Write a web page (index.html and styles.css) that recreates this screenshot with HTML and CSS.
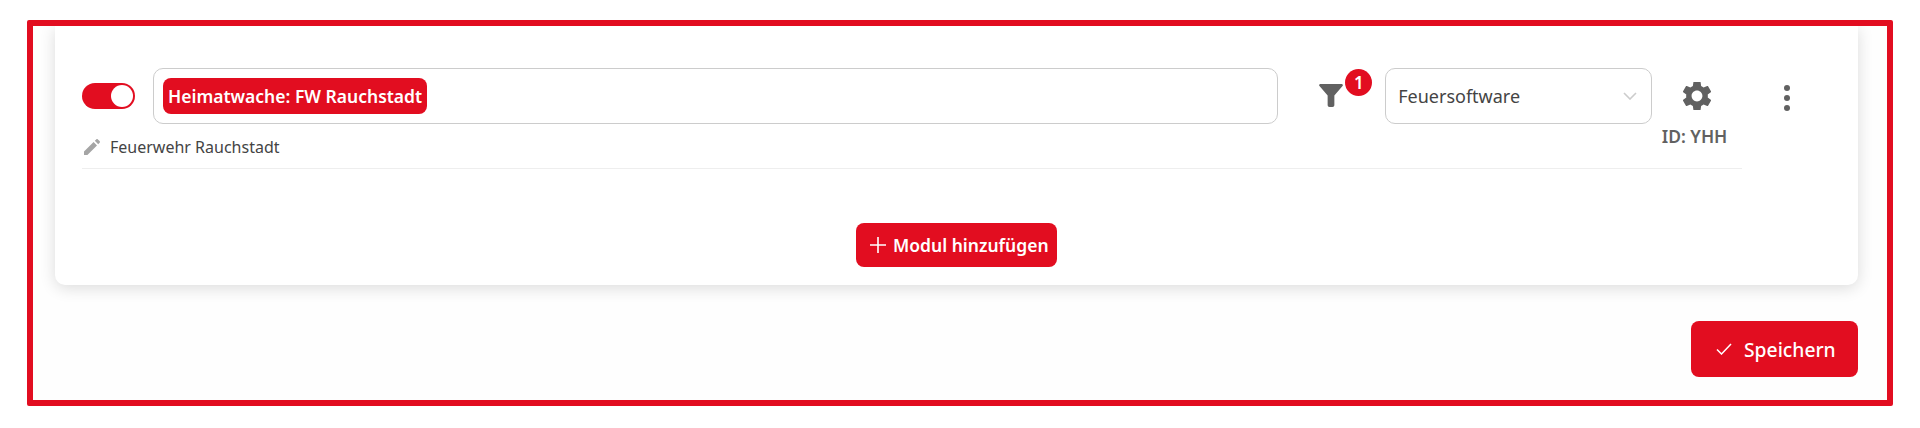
FILE: index.html
```html
<!DOCTYPE html>
<html lang="de">
<head>
    <meta charset="UTF-8">
    <meta name="viewport" content="width=device-width, initial-scale=1.0">
    <title>Module</title>
    <link rel="stylesheet" href="styles.css">
</head>
<body>
    <div class="frame">
        <div class="card">
            <div class="module-row">
                <div class="module">
                    <div class="module-left">
                        <div class="module-top">
                            <div class="toggle"><span class="knob"></span></div>
                            <div class="tag-input"><span class="chip">Heimatwache: FW Rauchstadt</span></div>
                        </div>
                        <div class="name-row">
                            <svg class="pencil" viewBox="0 0 16 16"><path d="M0 16v-3.4L9.6 3l3.4 3.4L3.4 16zM10.8 1.8 12.2.4c.5-.5 1.2-.5 1.7 0l1.7 1.7c.5.5.5 1.2 0 1.7l-1.4 1.4z"/></svg>
                            <span>Feuerwehr Rauchstadt</span>
                        </div>
                    </div>
                    <div class="filter">
                        <svg class="funnel" viewBox="0 0 25 24"><path d="M1.5 0h22c1.2 0 1.8 1.3 1 2.2L16 12v10c0 1.2-.8 2-2 2h-3c-1.2 0-2-.8-2-2V12L.5 2.2C-.3 1.3.3 0 1.5 0z"/></svg>
                        <span class="badge">1</span>
                    </div>
                    <div class="select">
                        <span>Feuersoftware</span>
                        <svg class="chevron" viewBox="0 0 14 8"><path d="M1 1l6 6 6-6"/></svg>
                    </div>
                    <div class="gear-col">
                        <svg class="gear" viewBox="2.7 2.7 18.6 18.6"><path d="M19.14 12.94c.04-.3.06-.61.06-.94 0-.32-.02-.64-.07-.94l2.03-1.58c.18-.14.23-.41.12-.61l-1.92-3.32c-.12-.22-.37-.29-.59-.22l-2.39.96c-.5-.38-1.03-.7-1.62-.94l-.36-2.54c-.04-.24-.24-.41-.48-.41h-3.84c-.24 0-.43.17-.47.41l-.36 2.54c-.59.24-1.13.57-1.62.94l-2.39-.96c-.22-.08-.47 0-.59.22L2.74 8.87c-.12.21-.08.47.12.61l2.03 1.58c-.05.3-.09.63-.09.94s.02.64.07.94l-2.03 1.58c-.18.14-.23.41-.12.61l1.92 3.32c.12.22.37.29.59.22l2.39-.96c.5.38 1.03.7 1.62.94l.36 2.54c.05.24.24.41.48.41h3.84c.24 0 .44-.17.47-.41l.36-2.54c.59-.24 1.13-.56 1.62-.94l2.39.96c.22.08.47 0 .59-.22l1.92-3.32c.12-.22.07-.47-.12-.61l-2.01-1.58zM12 15.6c-1.98 0-3.6-1.62-3.6-3.6s1.62-3.6 3.6-3.6 3.6 1.62 3.6 3.6-1.62 3.6-3.6 3.6z"/></svg>
                        <span class="module-id">ID: YHH</span>
                    </div>
                </div>
                <div class="more"><span></span><span></span><span></span></div>
            </div>
            <div class="add-row">
                <button class="btn btn-add" type="button">
                    <svg class="plus" viewBox="0 0 16 16"><path d="M8 0v16M0 8h16"/></svg>
                    Modul hinzufügen
                </button>
            </div>
        </div>
        <div class="save-row">
            <button class="btn btn-save" type="button">
                <svg class="check" viewBox="0 0 16 12"><path d="M1 6.5l4.5 4.5L15 1"/></svg>
                Speichern
            </button>
        </div>
    </div>
</body>
</html>
```

FILE: styles.css
```css
* {
    box-sizing: border-box;
}

body {
    margin: 0;
    background: #fff;
    font-family: "Noto Sans", "Open Sans", sans-serif;
    color: #333;
    overflow: hidden;
}

.frame {
    width: 1866px;
    height: 386px;
    margin: 20px 0 0 27px;
    padding: 0 29px 0 22px;
    border: 6px solid #e20d20;
    border-radius: 2px;
    background: #fefefe;
    overflow: hidden;
}

.card {
    height: 259px;
    padding: 42px 0 0 27px;
    background: #fff;
    border-radius: 0 0 10px 10px;
    box-shadow: 0 3px 16px rgba(0, 0, 0, 0.14);
}

.module-row {
    display: flex;
    align-items: flex-start;
}

.module {
    display: flex;
    align-items: flex-start;
    width: 1660px;
    height: 101px;
    border-bottom: 1px solid #eee;
}

.module-left {
    width: 1197px;
}

.module-top {
    display: flex;
    align-items: center;
    gap: 18px;
}

.toggle {
    display: flex;
    justify-content: flex-end;
    align-items: center;
    width: 53px;
    height: 26px;
    padding: 2px;
    background: #e20d20;
    border-radius: 13px;
}

.knob {
    width: 22px;
    height: 22px;
    background: #fff;
    border-radius: 50%;
}

.tag-input {
    flex: 1;
    height: 56px;
    padding: 9px;
    border: 1px solid #ccc;
    border-radius: 10px;
    background: #fff;
}

.chip {
    display: inline-block;
    height: 36px;
    padding: 0 5px;
    background: #e20d20;
    border-radius: 8px;
    color: #fff;
    font-size: 17.5px;
    font-weight: 600;
    line-height: 36px;
}

.name-row {
    display: flex;
    align-items: center;
    gap: 10px;
    margin: 13px 0 0 2px;
    font-size: 16px;
    line-height: 20px;
    color: #444;
}

.pencil {
    width: 16px;
    height: 16px;
    fill: #a5a5a5;
}

.filter {
    position: relative;
    margin: 15px 0 0 41px;
    width: 66px;
}

.funnel {
    display: block;
    width: 24px;
    height: 25px;
    fill: #616161;
}

.badge {
    position: absolute;
    left: 26px;
    top: -14px;
    width: 27px;
    height: 27px;
    background: #e20d20;
    border-radius: 50%;
    color: #fff;
    font-size: 17px;
    font-weight: 600;
    line-height: 27px;
    text-align: center;
}

.select {
    display: flex;
    align-items: center;
    justify-content: space-between;
    width: 267px;
    height: 56px;
    padding: 0 14px 0 12px;
    border: 1px solid #ccc;
    border-radius: 10px;
    background: #fff;
    font-size: 18px;
    color: #444;
}

.chevron {
    width: 14px;
    height: 8px;
    fill: none;
    stroke: #ccc;
    stroke-width: 1.6;
}

.gear-col {
    display: flex;
    flex-direction: column;
    align-items: center;
    width: 90px;
    padding-top: 14px;
}

.gear {
    width: 28px;
    height: 28px;
    fill: #616161;
}

.module-id {
    margin: 14px 5px 0 0;
    font-size: 17.5px;
    font-weight: 600;
    line-height: 24px;
    color: #616161;
    white-space: nowrap;
}

.more {
    display: flex;
    flex-direction: column;
    gap: 4px;
    margin: 17px 0 0 42px;
}

.more span {
    width: 6px;
    height: 6px;
    background: #616161;
    border-radius: 50%;
}

.add-row {
    display: flex;
    justify-content: center;
    margin-top: 54px;
    padding-right: 27px;
}

.btn {
    display: inline-flex;
    align-items: center;
    border: none;
    background: #e20d20;
    color: #fff;
    font-family: inherit;
    font-weight: 600;
    cursor: pointer;
}

.btn-add {
    width: 201px;
    height: 44px;
    padding: 0 0 0 14px;
    gap: 7px;
    border-radius: 8px;
    font-size: 17.5px;
    white-space: nowrap;
}

.plus {
    width: 16px;
    height: 16px;
    fill: none;
    stroke: #fff;
    stroke-width: 1.6;
}

.save-row {
    display: flex;
    justify-content: flex-end;
    margin-top: 36px;
}

.btn-save {
    width: 167px;
    height: 56px;
    padding: 0 0 0 25px;
    gap: 12px;
    border-radius: 8px;
    font-size: 19.3px;
    font-weight: 500;
}

.check {
    width: 16px;
    height: 12px;
    fill: none;
    stroke: #fff;
    stroke-width: 1.5;
}
```
